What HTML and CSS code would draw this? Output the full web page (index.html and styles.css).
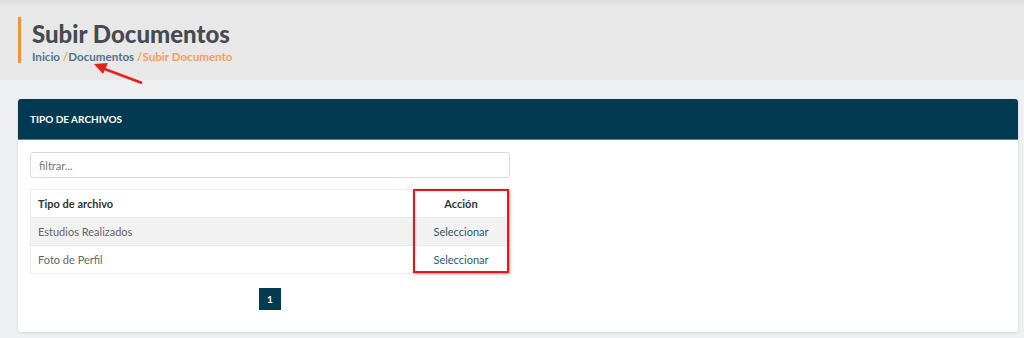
FILE: index.html
```html
<html>
    <head>
        <title>Subir Documentos</title>
        <link rel="stylesheet" href="styles.css">
    </head>
    <body>
        <div class="page-header">
            <div class="title-block">
                <h1>Subir Documentos</h1>
                <div class="breadcrumb">
                    <span class="crumb">Inicio</span>
                    <span class="sep">/</span><span class="crumb">Documentos</span>
                    <span class="sep">/</span><span class="crumb current">Subir Documento</span>
                </div>
            </div>
            <svg class="mark-arrow" width="60" height="30" viewBox="0 0 60 30">
                <line x1="52" y1="24" x2="12" y2="9" stroke="#e8201c" stroke-width="2.5"/>
                <polygon points="4,5 18,4 13,15" fill="#e8201c"/>
            </svg>
        </div>
        <div class="content">
            <div class="card">
                <div class="card-header">TIPO DE ARCHIVOS</div>
                <div class="card-body">
                    <input class="filter" type="text" placeholder="filtrar..."/>
                    <div class="table-wrap">
                        <table class="files">
                            <tr>
                                <th>Tipo de archivo</th>
                                <th class="action">Acción</th>
                            </tr>
                            <tr class="odd">
                                <td>Estudios Realizados</td>
                                <td class="action"><a href="#">Seleccionar</a></td>
                            </tr>
                            <tr>
                                <td>Foto de Perfil</td>
                                <td class="action"><a href="#">Seleccionar</a></td>
                            </tr>
                        </table>
                        <div class="highlight"></div>
                    </div>
                    <div class="pager">
                        <span class="page active">1</span>
                    </div>
                </div>
            </div>
        </div>
    </body>
</html>
```
FILE: styles.css
```css
body{
    margin: 0;
    font-family: Lato, 'Open Sans', sans-serif;
    background-color: #eef0f2;
}
.page-header{
    position: relative;
    height: 80px;
    padding: 17px 0 0 18px;
    box-sizing: border-box;
    background: linear-gradient(#dcdcdd, #e8e8e9 6px, #e8e8e9);
}
.title-block{
    border-left: 3px solid #f0923a;
    padding-left: 11px;
    padding-top: 2px;
    height: 44px;
}
h1{
    margin: 0;
    font-size: 24px;
    line-height: 30px;
    font-weight: 900;
    color: #464b51;
}
.breadcrumb{
    font-size: 11.6px;
    font-weight: 700;
    line-height: 16px;
    color: #4c7584;
}
.sep,
.crumb.current{
    color: #f0a055;
}
.mark-arrow{
    position: absolute;
    left: 90px;
    top: 59px;
}
.content{
    padding: 19px 6px 6px 18px;
}
.card{
    background: #fff;
    border-radius: 3px;
    box-shadow: 0 1px 3px rgba(0,0,0,0.12);
    height: 233px;
    overflow: hidden;
}
.card-header{
    background-color: #023b51;
    color: #fff;
    font-size: 10px;
    font-weight: 700;
    height: 41px;
    line-height: 41px;
    padding-left: 12px;
    border-bottom: 1px solid #5d8494;
    box-sizing: border-box;
}
.card-body{
    padding: 12px 12px;
}
.filter{
    display: block;
    width: 480px;
    height: 26px;
    padding: 0 8px;
    box-sizing: border-box;
    border: 1px solid #d8dadd;
    border-radius: 3px;
    font-family: inherit;
    font-size: 11px;
    color: #555;
}
.filter::placeholder{
    color: #777;
}
.table-wrap{
    position: relative;
    width: 480px;
    margin-top: 11px;
}
.files{
    width: 480px;
    border-collapse: collapse;
    border: 1px solid #ececec;
    font-size: 11px;
    color: #666;
}
.files th{
    text-align: left;
    color: #333;
    font-weight: 700;
    height: 28px;
    padding: 0 7px;
}
.files td{
    height: 28px;
    padding: 0 7px;
    border-top: 1px solid #e8e8e8;
}
.files tr.odd td{
    background-color: #f2f2f2;
}
.files .action{
    text-align: center;
    width: 82px;
}
.files a{
    color: #2c5a6c;
    text-decoration: none;
}
.highlight{
    position: absolute;
    left: 383px;
    top: 0;
    width: 92px;
    height: 80px;
    border: 2px solid #e8141a;
    box-shadow: 1px 1px 3px rgba(0,0,0,0.35);
}
.pager{
    display: flex;
    justify-content: center;
    width: 480px;
    margin-top: 14px;
}
.page{
    width: 22px;
    height: 22px;
    line-height: 22px;
    text-align: center;
    font-size: 10px;
    font-weight: 700;
}
.page.active{
    background-color: #023b51;
    color: #fff;
}
```
